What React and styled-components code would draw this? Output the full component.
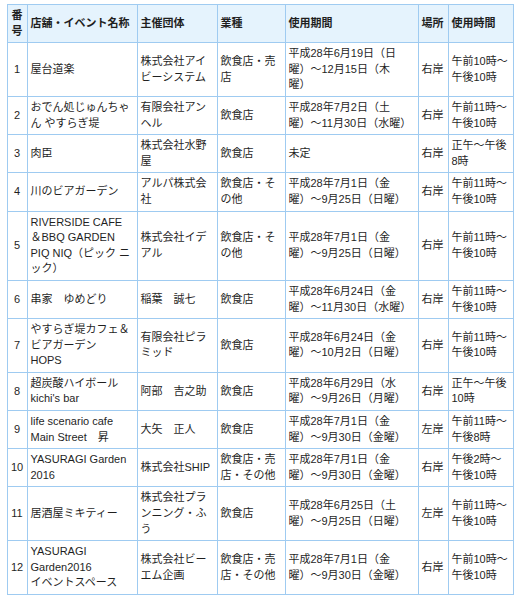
import React from 'react';
import styled, { createGlobalStyle } from 'styled-components';

const Global = createGlobalStyle`
  body {
    margin: 0;
    background: #fff;
    font-family: "Liberation Sans", "Noto Sans CJK JP", sans-serif;
    color: #1f1f1f;
  }
`

const Table = styled.table`
  margin: 4px 0 0 6.5px;
  width: 506px;
  table-layout: fixed;
  border-collapse: collapse;
  font-size: 11px;
`

const HeadCell = styled.th`
  background: #e5f3fd;
  border: 1px solid #9fcbf1;
  padding: 3px;
  font-weight: bold;
  text-align: ${p => (p.$center ? 'center' : 'left')};
  vertical-align: middle;
`

const Cell = styled.td`
  border: 1px solid #9fcbf1;
  padding: 3px;
  text-align: ${p => (p.$center ? 'center' : 'left')};
  vertical-align: middle;
`

const Line = styled.span`
  display: block;
  height: 15.6px;
  line-height: 15.6px;
  white-space: nowrap;
`

const widths = [20, 110, 80, 68, 133, 30, 65];

const header = [['番', '号'], ['店舗・イベント名称'], ['主催団体'], ['業種'], ['使用期間'], ['場所'], ['使用時間']];

const t1110 = ['午前11時〜', '午後10時'];

const rows = [
  [['1'], ['屋台道楽'], ['株式会社アイ', 'ビーシステム'], ['飲食店・売', '店'], ['平成28年6月19日（日', '曜）〜12月15日（木', '曜）'], ['右岸'], ['午前10時〜', '午後10時']],
  [['2'], ['おでん処じゅんちゃ', 'ん やすらぎ堤'], ['有限会社アン', 'ヘル'], ['飲食店'], ['平成28年7月2日（土', '曜）〜11月30日（水曜）'], ['右岸'], t1110],
  [['3'], ['肉臣'], ['株式会社水野', '屋'], ['飲食店'], ['未定'], ['右岸'], ['正午〜午後', '8時']],
  [['4'], ['川のビアガーデン'], ['アルパ株式会', '社'], ['飲食店・そ', 'の他'], ['平成28年7月1日（金', '曜）〜9月25日（日曜）'], ['右岸'], t1110],
  [['5'], ['RIVERSIDE CAFE', '＆BBQ GARDEN', 'PIQ NIQ（ピック ニ', 'ック）'], ['株式会社イデ', 'アル'], ['飲食店・そ', 'の他'], ['平成28年7月1日（金', '曜）〜9月25日（日曜）'], ['右岸'], t1110],
  [['6'], ['串家　ゆめどり'], ['稲葉　誠七'], ['飲食店'], ['平成28年6月24日（金', '曜）〜11月30日（水曜）'], ['右岸'], t1110],
  [['7'], ['やすらぎ堤カフェ＆', 'ビアガーデン', 'HOPS'], ['有限会社ピラ', 'ミッド'], ['飲食店'], ['平成28年6月24日（金', '曜）〜10月2日（日曜）'], ['右岸'], t1110],
  [['8'], ['超炭酸ハイボール', "kichi's bar"], ['阿部　吉之助'], ['飲食店'], ['平成28年6月29日（水', '曜）〜9月26日（月曜）'], ['右岸'], ['正午〜午後', '10時']],
  [['9'], ['life scenario cafe', 'Main Street　昇'], ['大矢　正人'], ['飲食店'], ['平成28年7月1日（金', '曜）〜9月30日（金曜）'], ['左岸'], ['午前11時〜', '午後8時']],
  [['10'], ['YASURAGI Garden', '2016'], ['株式会社SHIP'], ['飲食店・売', '店・その他'], ['平成28年7月1日（金', '曜）〜9月30日（金曜）'], ['右岸'], ['午後2時〜', '午後10時']],
  [['11'], ['居酒屋ミキティー'], ['株式会社プラ', 'ンニング・ふ', 'う'], ['飲食店'], ['平成28年6月25日（土', '曜）〜9月25日（日曜）'], ['左岸'], t1110],
  [['12'], ['YASURAGI', 'Garden2016', 'イベントスペース'], ['株式会社ビー', 'エム企画'], ['飲食店・売', '店・その他'], ['平成28年7月1日（金', '曜）〜9月30日（金曜）'], ['右岸'], ['午前10時〜', '午後10時']],
];

const Lines = ({ lines }) => lines.map((l, i) => <Line key={i}>{l}</Line>);

export default function App() {
  return (
    <>
      <Global />
      <Table>
        <colgroup>
          {widths.map((w, i) => <col key={i} style={{ width: w }} />)}
        </colgroup>
        <thead>
          <tr>
            {header.map((h, i) => (
              <HeadCell key={i} $center={i === 0}><Lines lines={h} /></HeadCell>
            ))}
          </tr>
        </thead>
        <tbody>
          {rows.map((r, ri) => (
            <tr key={ri}>
              {r.map((c, ci) => (
                <Cell key={ci} $center={ci === 0}><Lines lines={c} /></Cell>
              ))}
            </tr>
          ))}
        </tbody>
      </Table>
    </>
  );
}
